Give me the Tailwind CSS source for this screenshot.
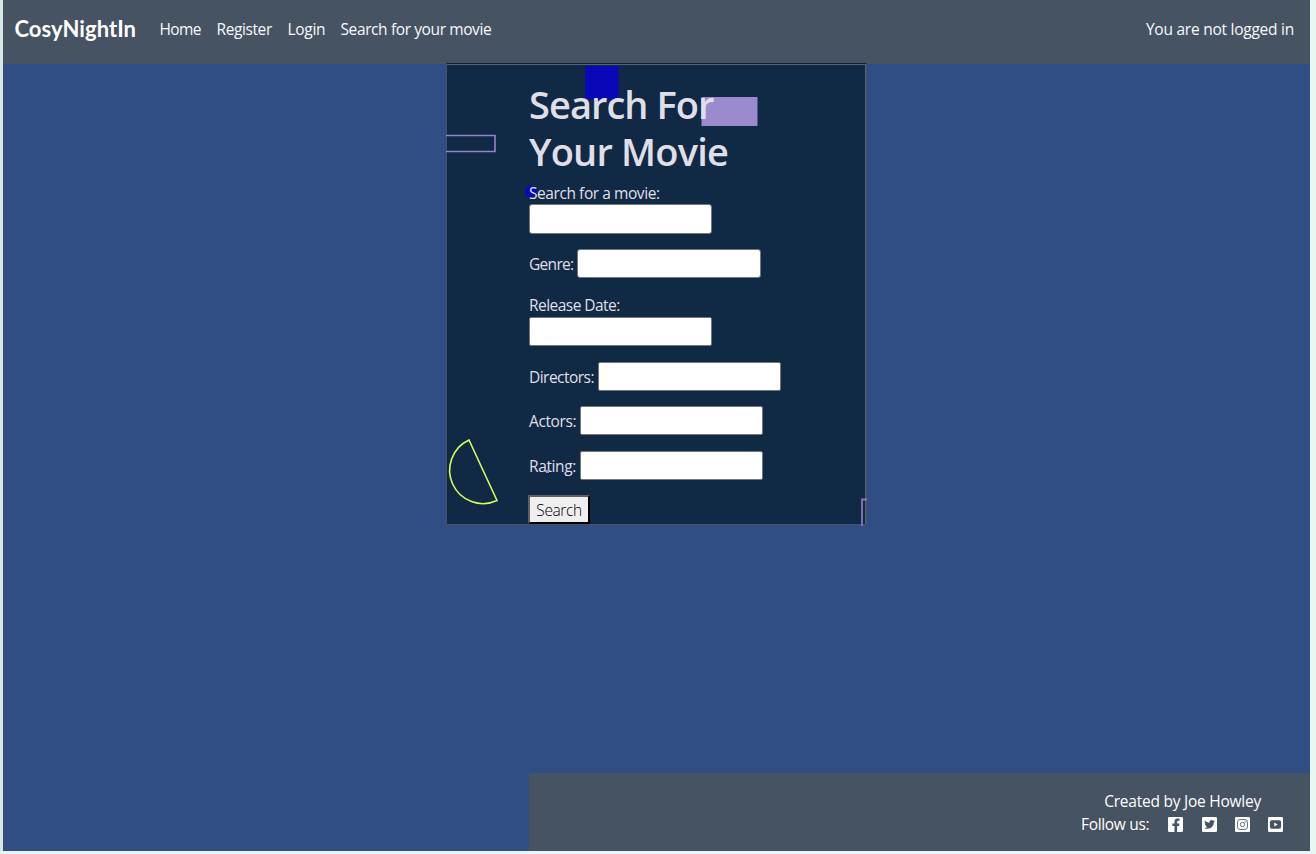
<!DOCTYPE html>
<html lang="en">
<head>
<meta charset="utf-8">
<title>CosyNightIn</title>
<script src="https://cdn.jsdelivr.net/npm/@tailwindcss/browser@4"></script>
</head>
<body class="h-[854px] w-[1316px] overflow-hidden bg-[#e9f7f2] font-['Open_Sans','Noto_Sans',sans-serif] text-[15.5px] leading-6">
<div class="flex h-[851px] w-[1310px] flex-col border-l-[3px] border-[#d7e8e4] bg-[#304d84]">
  <nav class="flex h-16 shrink-0 items-start bg-[#465362] pl-[11.5px] pr-4 pt-[17px] whitespace-nowrap text-[#f8f9fa]">
    <a class="w-[145px] font-['Lato',sans-serif] text-[22px] font-bold tracking-[0.05px] text-white">CosyNightIn</a>
    <a class="w-[57px] tracking-[-0.6px]">Home</a>
    <a class="w-[71px] tracking-[-0.4px]">Register</a>
    <a class="w-[53px] tracking-[-0.3px]">Login</a>
    <a class="tracking-[-0.39px]">Search for your movie</a>
    <span class="ml-auto tracking-[-0.25px]">You are not logged in</span>
  </nav>
  <main class="relative ml-[443px] -mt-px h-[462px] w-[421px] shrink-0 border border-[#465362] border-t-[#0c2238] bg-[#102a46] pl-[82px] whitespace-nowrap text-[#e0dfe6]">
    <svg class="absolute -left-px -top-px h-[463px] w-[422px]" viewBox="446 63 422 463" fill="none">
      <path d="M447 64.5H866" stroke="#56636e"/>
      <path d="M865.5 64V524" stroke="#56636e"/>
      <rect x="585" y="66" width="33.5" height="33.5" fill="#0808b8"/>
      <rect x="701.5" y="97" width="56" height="29" fill="#9b8ace"/>
      <path d="M446 135.5H495V151.500H446" stroke="#9584c9" stroke-width="1.6"/>
      <circle cx="531" cy="191.500" r="6" fill="#0808b8"/>
      <path d="M469 440A33.330 33.330 0 0 0 497 500.500Z" stroke="#d5ff55" stroke-width="1.6"/>
      <path d="M867 499.500H862V526" stroke="#8879bd" stroke-width="1.8"/>
    </svg>
    <div class="relative">
      <h1 class="pt-[17px] text-[38px] font-semibold leading-[47px]"><span class="block tracking-[-0.95px]">Search For</span><span class="block tracking-[-0.8px]">Your Movie</span></h1>
      <div class="mt-[7px] flex h-[22px] items-center"><label class="tracking-[-0.43px]">Search for a movie:</label></div>
      <div class="h-[30px] w-[183px] rounded-[3px] border border-[#767676] bg-white"></div>
      <div class="mt-[15px] flex h-[29px] items-center"><label class="w-[48px] tracking-[-0.7px]">Genre:</label><div class="h-[29px] w-[184px] rounded-[3px] border border-[#767676] bg-white"></div></div>
      <div class="mt-[15px] flex h-[24px] items-center"><label class="tracking-[-0.54px]">Release Date:</label></div>
      <div class="h-[29px] w-[183px] rounded-[2px] border border-[#767676] bg-white"></div>
      <div class="mt-[16px] flex h-[29px] items-center"><label class="w-[69px] tracking-[-0.53px]">Directors:</label><div class="h-[29px] w-[183px] rounded-[2px] border border-[#767676] bg-white"></div></div>
      <div class="mt-[15px] flex h-[29px] items-center"><label class="w-[51px] tracking-[-0.4px]">Actors:</label><div class="h-[29px] w-[183px] rounded-[2px] border border-[#767676] bg-white"></div></div>
      <div class="mt-[16px] flex h-[29px] items-center"><label class="w-[51px] tracking-[-0.38px]">Rating:</label><div class="h-[29px] w-[183px] rounded-[2px] border border-[#767676] bg-white"></div></div>
      <button class="-ml-px mt-[15px] flex h-[29px] w-[62px] items-center justify-center border-2 border-[#606060] border-r-black border-b-black bg-[#efefef] font-light tracking-[-0.4px] text-black">Search</button>
    </div>
    <span class="absolute left-[99px] top-[406px] h-[3px] w-[3px] bg-[#9b8ace]"></span>
  </main>
  <footer class="ml-auto mt-auto flex h-[78px] w-[781px] shrink-0 flex-col items-end bg-[#465362] pt-[16px] whitespace-nowrap text-white">
    <div class="mr-[49px] h-[23px] tracking-[-0.24px]">Created by Joe Howley</div>
    <div class="flex h-6 w-[229px] items-center">
      <span class="w-[87px] tracking-[-0.33px]">Follow us:</span>
      <svg class="mr-[19px] h-[15px] w-[15px]" viewBox="0 0 448 448"><rect width="448" height="448" rx="40" fill="#fff"/><path d="M246 448V267h-63v-71h63v-55c0-62 37-96 94-96 27 0 55 5 55 5v61h-31c-31 0-40 19-40 38v47h68l-11 71h-57v181z" transform="translate(-52 0)" fill="#465362"/></svg>
      <svg class="mr-[18px] h-[15px] w-[15px]" viewBox="0 0 448 448"><rect width="448" height="448" rx="40" fill="#fff"/><path d="M351 159c0 3 0 6 0 8 0 87-66 187-186 187-37 0-72-11-101-29 36 4 72-6 100-28-29-1-53-20-61-46 10 2 20 1 30-1-31-6-53-33-53-65 9 5 19 8 30 8-29-20-38-58-20-88 32 40 81 66 135 69-10-44 24-81 64-81 19 0 36 8 48 21 15-3 29-8 42-16-5 15-15 28-29 36 13-1 26-5 38-10-9 13-20 25-33 35z" fill="#465362"/></svg>
      <svg class="mr-[18px] h-[15px] w-[15px]" viewBox="0 0 448 448"><rect width="448" height="448" rx="40" fill="#fff"/><g fill="none" stroke="#465362" stroke-width="25"><rect x="76" y="76" width="296" height="296" rx="76"/><circle cx="224" cy="224" r="65"/></g><circle cx="304" cy="145" r="20" fill="#465362"/></svg>
      <svg class="h-[15px] w-[15px]" viewBox="0 0 448 448"><rect width="448" height="448" rx="40" fill="#fff"/><rect x="57" y="100" width="334" height="248" rx="58" fill="#465362"/><path d="M187 165v118l103-59z" fill="#fff"/></svg>
    </div>
  </footer>
</div>
</body>
</html>
